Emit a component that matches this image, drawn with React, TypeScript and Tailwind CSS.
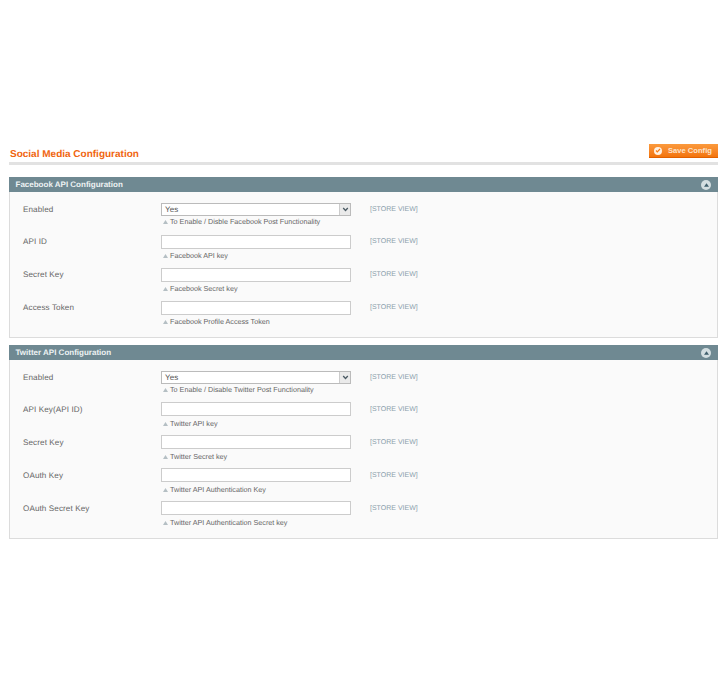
import React from "react";

type Field = {
  label: string;
  hint: string;
  select?: boolean;
};

const facebookFields: Field[] = [
  { label: "Enabled", hint: "To Enable / Disble Facebook Post Functionality", select: true },
  { label: "API ID", hint: "Facebook API key" },
  { label: "Secret Key", hint: "Facebook Secret key" },
  { label: "Access Token", hint: "Facebook Profile Access Token" },
];

const twitterFields: Field[] = [
  { label: "Enabled", hint: "To Enable / Disable Twitter Post Functionality", select: true },
  { label: "API Key(API ID)", hint: "Twitter API key" },
  { label: "Secret Key", hint: "Twitter Secret key" },
  { label: "OAuth Key", hint: "Twitter API Authentication Key" },
  { label: "OAuth Secret Key", hint: "Twitter API Authentication Secret key" },
];

const Row = ({ field, compact }: { field: Field; compact?: boolean }) => {
  const rowHeight = field.select ? (compact ? "h-[31px]" : "h-[32px]") : "h-[33px]";
  const shifted = compact && !field.select;

  return (
    <div className={`flex items-start ${rowHeight}`}>
      <div className={`w-[138px] text-[8.1px] leading-[12px] tracking-[0.1px] text-[#666] ${shifted ? "mt-[2px]" : "mt-px"}`}>
        {field.label}
      </div>
      <div className="w-[190px]">
        {field.select ? (
          <div className="flex h-[13px] w-[190px] items-center justify-between border border-[#bbb] bg-white pl-[3px] text-[8px] tracking-[0.1px] text-[#555]">
            <span>Yes</span>
            <span className="flex h-[11px] w-[11px] items-center justify-center border-l border-[#ccc] bg-[#eaeaea]">
              <svg width="7" height="5" viewBox="0 0 7 5">
                <path d="M1.2 1l2.3 2.5L5.8 1" fill="none" stroke="#4a5a63" strokeWidth="1.3" />
              </svg>
            </span>
          </div>
        ) : (
          <div className="h-[14px] w-[190px] border border-[#ccc] bg-white" />
        )}
        <div
          className={`flex h-[12px] items-center pl-[2px] text-[7.2px] text-[#666] ${
            field.select ? "mt-[0.5px]" : shifted ? "mt-[2px]" : "mt-px"
          }`}
        >
          <svg width="5" height="4" viewBox="0 0 5 4" className="mr-[2px] -mt-px">
            <path d="M2.5 0L5 4H0z" fill="#b5bfc4" />
          </svg>
          {field.hint}
        </div>
      </div>
      <div className={`ml-[19px] text-[7px] leading-[11px] text-[#8aa0ac] ${shifted ? "mt-[2px]" : "mt-px"}`}>
        [STORE VIEW]
      </div>
    </div>
  );
};

const Section = ({
  title,
  fields,
  bodyClass,
  compact,
}: {
  title: string;
  fields: Field[];
  bodyClass: string;
  compact?: boolean;
}) => {
  return (
    <section>
      <div className="flex h-[15px] items-center justify-between bg-[#6f8992] pl-[6.5px] pr-[7px] text-[8px] font-bold text-[#eef3f4]">
        <span>{title}</span>
        <span className="flex h-[10px] w-[10px] items-center justify-center rounded-full bg-[#d3dee1]">
          <svg width="5" height="4" viewBox="0 0 6 4">
            <path d="M3 0l3 4H0z" fill="#3f5f6c" />
          </svg>
        </span>
      </div>
      <div className={`border border-t-0 border-[#dcdcdc] bg-[#fafafa] pl-[13px] ${bodyClass}`}>
        {fields.map((field) => (
          <Row key={field.label} field={field} compact={compact} />
        ))}
      </div>
    </section>
  );
};

const App = () => {
  return (
    <div className="h-[680px] w-[725px] bg-white pl-[9px] pr-[7px] pt-[144px] font-['Liberation_Sans',Arial,sans-serif] [text-rendering:geometricPrecision]">
      {/* Page title and save button */}
      <div className="flex h-[18px] items-start justify-between">
        <h1 className="pl-px pt-[3.5px] text-[10px] font-bold leading-[13px] text-[#f0650f]">Social Media Configuration</h1>
        <button className="flex h-[14px] w-[69px] items-center border-b border-[#e06000] bg-gradient-to-b from-[#fb9a3c] to-[#f37408] pl-[5px] text-[7.6px] font-bold text-[#fde3c9]">
          <span className="mr-[6px] flex h-[8px] w-[8px] items-center justify-center rounded-full bg-[#fff1e2]">
            <svg width="6" height="5" viewBox="0 0 6 5">
              <path d="M1 2.5l1.3 1.3L5 1" fill="none" stroke="#f77c16" strokeWidth="1.2" />
            </svg>
          </span>
          Save Config
        </button>
      </div>
      <div className="h-[3px] bg-[#e2e2e2]" />

      <div className="mt-[12px]">
        <Section title="Facebook API Configuration" fields={facebookFields} bodyClass="h-[146px] pt-[11px]" />
      </div>
      <div className="mt-[7px]">
        <Section title="Twitter API Configuration" fields={twitterFields} bodyClass="h-[179px] pt-[11px]" compact />
      </div>
    </div>
  );
};

export default App;
